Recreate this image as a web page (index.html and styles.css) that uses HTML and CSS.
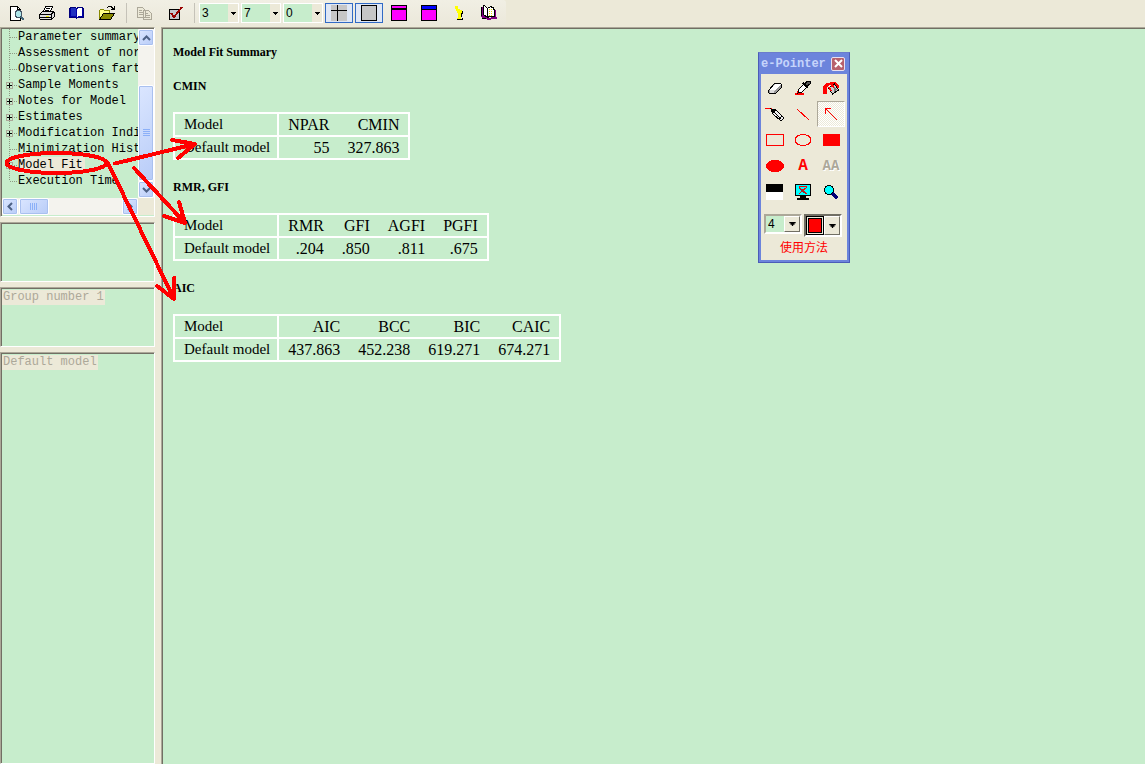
FILE: index.html
```html
<!DOCTYPE html>
<html lang="en">
<head>
<meta charset="utf-8">
<title>Amos Output</title>
<link rel="stylesheet" href="styles.css">
</head>
<body>
<svg class="defs" aria-hidden="true">
  <symbol id="leaf" viewBox="0 0 16 16"><path d="M7.5 0V16M8 8.5H15" class="dots"/></symbol>
  <symbol id="last" viewBox="0 0 16 16"><path d="M7.5 0V8M8 8.5H15" class="dots"/></symbol>
  <symbol id="plus" viewBox="0 0 16 16"><path d="M7.5 0V4M7.5 12V16M12 8.5H15" class="dots"/><path d="M4.500 5.500h6v6h-6z" fill="none" stroke="#aca899"/><path d="M5 8.500h5M7.500 6v5" stroke="#000"/></symbol>
  <symbol id="drop" viewBox="0 0 5 3"><path d="M0 0h5v1H4v1H3v1H2V2H1V1H0z"/></symbol>
</svg>

<header class="toolbar">
  <div class="band">
  <button class="tool" aria-label="Print preview"><svg width="18" height="17" viewBox="0 0 18 17"><path d="M2.500 1.500h7l3 3v11h-10z" fill="#fff" stroke="#000"/><path d="M9.500 1.500v3h3" fill="none" stroke="#000"/><circle cx="10.500" cy="9" r="3.500" fill="#aee6ea" stroke="#456"/><path d="M13 12l3 3" stroke="#467" stroke-width="2"/></svg></button>
  <button class="tool" aria-label="Print"><svg width="18" height="17" viewBox="0 0 18 17"><path d="M5.500 6.500l2-5h7l-2 5z" fill="#fff" stroke="#000"/><path d="M8 3.500h4M7 5.500h4" stroke="#000"/><path d="M1.500 9.500l3-3h11l1 1v4l-3 3h-11l-1-1z" fill="#ddd" stroke="#000"/><path d="M2 9.500h11l3-3M2 12.500h11M13.500 10v4" fill="none" stroke="#000"/><path d="M8 11.500h3" stroke="#ee0"/></svg></button>
  <button class="tool" aria-label="Contents"><svg width="18" height="17" viewBox="0 0 18 17"><path d="M1.500 3.500h1v-1h5l1 1 1-1h5v1h1v9h-6l-1 1-1-1h-6z" fill="#0000a8" stroke="#00007c"/><path d="M3 3h4l1 1v8l-1-1H3z" fill="#2030c0"/><path d="M9 4l1-1h4v8h-4l-1 1z" fill="#fff"/></svg></button>
  <button class="tool" aria-label="Open"><svg width="18" height="17" viewBox="0 0 18 17"><path d="M1.500 14V5.500l1-1h3l1 1h5v3" fill="#ff8" stroke="#880"/><path d="M1.500 14.500l4-6h11l-4 6z" fill="#880" stroke="#000"/><path d="M9 3l2-1.500h2l3 3M13 4.500h3.500V1" fill="none" stroke="#000"/></svg></button>
  <span class="sep"></span>
  <button class="tool" aria-label="Copy" disabled><svg width="18" height="17" viewBox="0 0 18 17"><path d="M1.500 2.500h5l3 3v7h-8zM7.500 5.500h5l3 3v6h-8z" fill="#ece9d8" stroke="#aca899"/><path d="M3 5.500h3M3 7.500h4M3 9.500h4M9 8.500h3M9 10.500h5M9 12.500h5" stroke="#aca899"/></svg></button>
  <button class="tool" aria-label="Options"><svg width="18" height="17" viewBox="0 0 18 17"><path d="M3.500 4.500h10v10h-10z" fill="#c4c4cc" stroke="#000"/><path d="M5 8l3 4 8-10" fill="none" stroke="#900" stroke-width="2"/></svg></button>
  <span class="sep"></span>
  <span class="combo"><select aria-label="Column width"><option>3</option></select><svg width="5" height="3"><use href="#drop"/></svg></span>
  <span class="combo"><select aria-label="Digits"><option>7</option></select><svg width="5" height="3"><use href="#drop"/></svg></span>
  <span class="combo"><select aria-label="Decimals"><option>0</option></select><svg width="5" height="3"><use href="#drop"/></svg></span>
  <button class="tool pressed" aria-label="Grid lines" aria-pressed="true"><svg width="16" height="16" viewBox="0 0 16 16"><path d="M0 0h16v16H0z" fill="#c6c6c6"/><path d="M0 5.500h16M6.500 0v16" stroke="#000"/></svg></button>
  <button class="tool pressed" aria-label="Border" aria-pressed="true"><svg width="16" height="16" viewBox="0 0 16 16"><path d="M.5.500h15v15H.5z" fill="#c6c6c6" stroke="#000"/></svg></button>
  <button class="tool" aria-label="Table heading"><svg width="16" height="16" viewBox="0 0 16 16"><path d="M.5.500h15v15H.5z" fill="#f0f" stroke="#000"/><path d="M0 4h16" stroke="#000" stroke-width="2"/></svg></button>
  <button class="tool" aria-label="Table title"><svg width="16" height="16" viewBox="0 0 16 16"><path d="M.5.500h15v15H.5z" fill="#f0f" stroke="#000"/><path d="M1 1h14v3H1z" fill="#00f"/><path d="M0 4.500h16" stroke="#000"/></svg></button>
  <button class="tool" aria-label="Information"><svg width="10" height="16" viewBox="0 0 10 16"><path d="M6 5h2v1h1v3H8v4h1v2H3v-1h5z" fill="#000"/><path d="M1 1h3v3H1zM2 4h4v1h2v3H7v6H3v-1h1V8H3V6H2z" fill="#ff0"/></svg></button>
  <button class="tool" aria-label="Help"><svg width="18" height="16" viewBox="0 0 18 16"><path d="M1 2h3v9l4 2h2l2-1h5v2h-5l-2 1H8l-2-1H3l-2-2zM14 5h2v8h-2z" fill="#800080"/><path d="M1.500 2v9M2 13h4" fill="none" stroke="#000"/><path d="M3.500.5h1l3 3v9l-4-3zM7.500 12.500v-9l3-2h1v1h2v2h1v7h-5z" fill="#fff" stroke="#000"/><path d="M9.500 4v7M11.500 4v7" stroke="#dd0" stroke-dasharray="1 1"/></svg></button>
  </div>
</header>

<div class="workspace">
  <aside class="side">
    <nav class="pane tree" aria-label="Output sections">
      <ul class="items">
        <li><svg class="twig"><use href="#leaf"/></svg><span>Parameter summary</span></li>
        <li><svg class="twig"><use href="#leaf"/></svg><span>Assessment of nor</span></li>
        <li><svg class="twig"><use href="#leaf"/></svg><span>Observations fart</span></li>
        <li><svg class="twig"><use href="#plus"/></svg><span>Sample Moments</span></li>
        <li><svg class="twig"><use href="#plus"/></svg><span>Notes for Model</span></li>
        <li><svg class="twig"><use href="#plus"/></svg><span>Estimates</span></li>
        <li><svg class="twig"><use href="#plus"/></svg><span>Modification Indi</span></li>
        <li><svg class="twig"><use href="#leaf"/></svg><span>Minimization Hist</span></li>
        <li><svg class="twig"><use href="#plus"/></svg><span class="chosen">Model Fit</span></li>
        <li><svg class="twig"><use href="#last"/></svg><span>Execution Time</span></li>
      </ul>
      <div class="vbar">
        <button class="arrow" aria-label="Scroll up"><svg width="9" height="6" viewBox="0 0 9 6"><path d="M1 5l3.500-3.500L8 5"/></svg></button>
        <div class="thumb"><svg width="7" height="8" viewBox="0 0 7 8"><path d="M0 .5h7M0 2.500h7M0 4.500h7M0 6.500h7"/></svg></div>
        <button class="arrow" aria-label="Scroll down"><svg width="9" height="6" viewBox="0 0 9 6"><path d="M1 1l3.500 3.500L8 1"/></svg></button>
      </div>
      <div class="hbar">
        <button class="arrow" aria-label="Scroll left"><svg width="6" height="9" viewBox="0 0 6 9"><path d="M5 1L1.500 4.500 5 8"/></svg></button>
        <div class="thumb"><svg width="8" height="7" viewBox="0 0 8 7"><path d="M.5 0v7M2.500 0v7M4.500 0v7M6.500 0v7"/></svg></div>
        <button class="arrow" aria-label="Scroll right"><svg width="6" height="9" viewBox="0 0 6 9"><path d="M1 1l3.500 3.500L1 8"/></svg></button>
      </div>
      <div class="corner"></div>
    </nav>
    <section class="pane short"></section>
    <section class="pane short"><span class="muted">Group number 1</span></section>
    <section class="pane rest"><span class="muted">Default model</span></section>
  </aside>

  <main class="output">
    <h1>Model Fit Summary</h1>
    <h2>CMIN</h2>
    <table>
      <tr><th>Model</th><th>NPAR</th><th>CMIN</th></tr>
      <tr><td>Default model</td><td>55</td><td>327.863</td></tr>
    </table>
    <h2>RMR, GFI</h2>
    <table>
      <tr><th>Model</th><th>RMR</th><th>GFI</th><th>AGFI</th><th>PGFI</th></tr>
      <tr><td>Default model</td><td>.204</td><td>.850</td><td>.811</td><td>.675</td></tr>
    </table>
    <h2>AIC</h2>
    <table>
      <tr><th>Model</th><th>AIC</th><th>BCC</th><th>BIC</th><th>CAIC</th></tr>
      <tr><td>Default model</td><td>437.863</td><td>452.238</td><td>619.271</td><td>674.271</td></tr>
    </table>
  </main>
</div>

<svg class="ink" width="220" height="320" viewBox="0 0 220 320" aria-hidden="true">
  <ellipse cx="56.500" cy="163" rx="50" ry="10"/>
  <path d="M115 163.500L195 144M172 140l23 4-17 14"/>
  <path d="M134 168l51 55M179 202l6 21-21-7"/>
  <path d="M108 163l66 136M174 278v21l-17-13"/>
</svg>

<section class="pointer" aria-label="e-Pointer">
  <div class="title"><span>e-Pointer</span><button class="close" aria-label="Close"><svg width="9" height="9" viewBox="0 0 9 9"><path d="M1 1l7 7M8 1L1 8"/></svg></button></div>
  <div class="body">
    <div class="palette">
      <button aria-label="Eraser"><svg width="18" height="18" viewBox="0 0 18 18"><path d="M2.500 11.500l6-7h6l1 1v3l-6 6h-6l-1-1z" fill="#999" stroke="#000"/><path d="M3 11l6-6h6l-6 6z" fill="#fff"/><path d="M4 11h5l-1 3H4z" fill="#ddd"/></svg></button>
      <button aria-label="Colour picker"><svg width="18" height="18" viewBox="0 0 18 18"><path d="M1 14h9v2H1zM3 12h5v2H3z" fill="#f00"/><path d="M4 14l1-4 5-5 3 3-5 5z" fill="#fff" stroke="#000"/><path d="M9 4l5 5" stroke="#000" stroke-width="2"/><path d="M11 5l2-3h3v3l-3 2z" fill="#555" stroke="#000"/></svg></button>
      <button aria-label="Fill"><svg width="18" height="18" viewBox="0 0 18 18"><path d="M1 15V7l3-3h3l2-1h4l4 4v2h-2l-3-3H7L5 8v7z" fill="#f00"/><path d="M6.500 9l6-4 4 6-6 4z" fill="#ccc" stroke="#000"/><path d="M12 7l3 4-3 2z" fill="#777"/><path d="M7 8l2 4M9 6l3 2" fill="none" stroke="#f00" stroke-width="2"/></svg></button>
      <button aria-label="Pencil"><svg width="20" height="18" viewBox="0 0 20 18"><path d="M0 3.500h7" stroke="#f00"/><path d="M6 4l5 1 8 8-3 3-8-7z" fill="#eee" stroke="#000"/><path d="M6 4l5 1-3 3z" stroke="#000"/><path d="M9 7l7 7M14 14l3-3" fill="none" stroke="#000"/></svg></button>
      <button aria-label="Line"><svg width="18" height="18" viewBox="0 0 18 18"><path d="M3 4l12 11" stroke="#f00"/></svg></button>
      <button class="active" aria-label="Arrow" aria-pressed="true"><svg width="18" height="18" viewBox="0 0 18 18"><path d="M3 3l12 12M3 9V3h6" fill="none" stroke="#f00"/></svg></button>
      <button aria-label="Rectangle"><svg width="18" height="18" viewBox="0 0 18 18"><path d="M.5 3.500h17v11H.5z" fill="none" stroke="#f00"/></svg></button>
      <button aria-label="Ellipse"><svg width="18" height="18" viewBox="0 0 18 18"><ellipse cx="9" cy="9" rx="8" ry="5.500" fill="none" stroke="#f00"/></svg></button>
      <button aria-label="Filled rectangle"><svg width="18" height="18" viewBox="0 0 18 18"><path d="M1 3h17v12H1z" fill="#f00"/></svg></button>
      <button aria-label="Filled ellipse"><svg width="18" height="18" viewBox="0 0 18 18"><ellipse cx="9" cy="9" rx="9" ry="6" fill="#f00"/></svg></button>
      <button aria-label="Text" class="letter">A</button>
      <button aria-label="Smooth text" class="letter gray" disabled>AA</button>
      <button aria-label="Board"><svg width="18" height="18" viewBox="0 0 18 18"><path d="M0 1h17v8H0z" fill="#000"/><path d="M0 9h17v8H0z" fill="#fff"/></svg></button>
      <button aria-label="Clear screen"><svg width="18" height="18" viewBox="0 0 18 18"><path d="M1.500 1.500h15v11h-15z" fill="#0ff" stroke="#000"/><path d="M6 13h6v2H6zM3 15h12v2H3z"/><path d="M5 4l8 7M13 4l-8 7M5 3.500h8" fill="none" stroke="#f00"/><path d="M5 5l7 6" stroke="#833"/></svg></button>
      <button aria-label="Magnifier"><svg width="18" height="18" viewBox="0 0 18 18"><circle cx="7" cy="7" r="4.500" fill="#0ff" stroke="#000"/><path d="M10.500 10.500l5 5" stroke="#007" stroke-width="3"/></svg></button>
    </div>
    <div class="choices">
      <span class="size"><select aria-label="Pen width"><option>4</option></select><span class="knob"><svg width="7" height="4" viewBox="0 0 5 3"><use href="#drop"/></svg></span></span>
      <button class="color" aria-label="Pen colour"><span class="swatch"></span><span class="knob"><svg width="7" height="4" viewBox="0 0 5 3"><use href="#drop"/></svg></span></button>
    </div>
    <a class="help" href="#" lang="zh">使用方法</a>
  </div>
</section>
</body>
</html>
```
FILE: styles.css
```css
:root {
  --face: #ece9d8;
  --green: #c7edcc;
  --shadow: #aca899;
  --dark: #716f64;
}
* { box-sizing: border-box; }
body {
  margin: 0;
  height: 100vh;
  display: flex;
  flex-direction: column;
  overflow: hidden;
  position: relative;
  background: var(--face);
  font-family: "Liberation Sans", sans-serif;
}
button, select { margin: 0; padding: 0; border: 0; background: none; font: inherit; color: #000; }
svg { display: block; flex: none; }
.defs { position: absolute; width: 0; height: 0; }
.dots { stroke: #8f9a84; stroke-dasharray: 1 1; fill: none; }

.toolbar { flex: none; height: 27px; background: var(--face); }
.band {
  display: flex;
  align-items: center;
  width: fit-content;
  height: 26px;
  padding: 0 2px;
  border-radius: 0 3px 3px 0;
  background: linear-gradient(#f1efe4, #ebe8da);
}
.tool {
  width: 28px;
  height: 20px;
  margin: 0 1px;
  display: flex;
  align-items: center;
  justify-content: center;
}
.tool svg { shape-rendering: crispEdges; }
.pressed { border: 1px solid #316ac5; background: #dfe7f5; }
.sep { width: 8px; height: 20px; background: linear-gradient(#c5c2b8, #c5c2b8) center / 1px 100% no-repeat; }
.combo {
  position: relative;
  display: flex;
  width: 40px;
  height: 20px;
  margin: 0 1px;
  border: 1px solid #fff;
  background: var(--face);
}
.combo select {
  appearance: none;
  width: 100%;
  padding-left: 2px;
  background: linear-gradient(90deg, var(--green) 28px, transparent 28px);
  font-size: 12px;
}
.combo svg { position: absolute; right: 2px; top: 8px; }

.workspace { flex: 1; min-height: 0; display: flex; gap: 6px; }
.side { flex: none; width: 155px; display: flex; flex-direction: column; gap: 5px; }
.pane, .output {
  border: 1px solid var(--shadow);
  border-right-color: #fff;
  border-bottom-color: #fff;
  background: var(--green);
  box-shadow: inset 1px 1px var(--dark);
}
.pane { font: 12px/15px "Liberation Mono", monospace; }
.short { flex: none; height: 60px; padding: 2px 1px; }
.rest { flex: 1; padding: 2px 1px; }
.muted { display: inline-block; padding: 0 1px; background: var(--face); color: var(--shadow); }

.tree {
  flex: none;
  display: grid;
  grid-template: 169px 17px / 1fr 16px;
  height: 190px;
  padding: 1px 0 0 1px;
}
.items { margin: 0; padding: 0; list-style: none; overflow: hidden; }
.items li { display: flex; align-items: center; height: 16px; white-space: nowrap; }
.items span { line-height: 16px; }
.items .chosen { padding-right: 2px; background: var(--face); }
.twig { width: 16px; height: 16px; shape-rendering: crispEdges; }
.vbar, .hbar { display: flex; background: #f4f3ee; }
.vbar { flex-direction: column; justify-content: space-between; }
.corner { background: var(--face); }
.arrow, .thumb {
  display: flex;
  align-items: center;
  justify-content: center;
  border: 1px solid #fff;
  border-radius: 2px;
  background: linear-gradient(135deg, #dbe6ff, #b8ccf8);
  box-shadow: inset 0 0 0 1px #a9c0ef;
}
.arrow { flex: none; width: 16px; height: 17px; }
.arrow path { fill: none; stroke: #4d6185; stroke-width: 2; }
.thumb path { stroke: #8cb0f8; shape-rendering: crispEdges; }
.vbar .thumb { height: 96px; margin-top: auto; }
.hbar .thumb { width: 30px; margin: 0 auto 0 1px; }

.output { flex: 1; min-width: 0; padding: 16px 11px; border-right: 0; border-bottom: 0; font-family: "Liberation Serif", serif; }
h1, h2 { margin: 0 0 18px; font-size: 12px; line-height: 16px; font-weight: bold; }
table { margin-bottom: 19px; border: 2px solid #fff; border-collapse: collapse; font-size: 16px; line-height: 21px; }
th, td { padding: 0 9px; font-weight: normal; text-align: right; }
th { border-bottom: 2px solid #fff; }
th:first-child, td:first-child { padding-right: 7px; border-right: 2px solid #fff; text-align: left; font-size: 15px; }

.ink { position: absolute; left: 0; top: 0; fill: none; stroke: #f00; stroke-width: 4; stroke-linecap: round; stroke-linejoin: round; shape-rendering: crispEdges; pointer-events: none; }

.pointer {
  position: absolute;
  left: 758px;
  top: 52px;
  width: 92px;
  padding: 0 2px 2px;
  border: 1px solid #4a5cb8;
  border-top-color: #6b7ccc;
  background: #6c84dc;
}
.title {
  display: flex;
  align-items: center;
  justify-content: space-between;
  height: 21px;
  padding-right: 2px;
  color: #c6d4fb;
  font: bold 12px/20px "Liberation Mono", monospace;
}
.close {
  width: 14px;
  height: 14px;
  display: flex;
  align-items: center;
  justify-content: center;
  border: 1px solid #e8e0f0;
  border-radius: 2px;
  background: #b8606c;
}
.close path { stroke: #fff; stroke-width: 2; }
.body { padding: 1px 0 4px; background: var(--face); display: flex; flex-direction: column; }
.palette { display: grid; grid-template-columns: repeat(3, 28px); grid-auto-rows: 26px; }
.palette button { display: flex; align-items: center; justify-content: center; }
.palette svg { shape-rendering: crispEdges; }
.palette .active {
  border: 1px solid;
  border-color: var(--shadow) #fff #fff var(--shadow);
  background: repeating-conic-gradient(#fff 0 25%, #ece9d8 0 50%) 0 0 / 2px 2px;
}
.palette .letter { color: #f00; font: bold 16px/16px "Liberation Mono", monospace; }
.palette .gray { color: var(--shadow); font-size: 14px; text-shadow: 1px 1px #fff; }
.choices { display: flex; justify-content: space-between; padding: 9px 5px 0 3px; }
.size, .color {
  display: flex;
  width: 38px;
  height: 20px;
  border: 2px solid;
  border-color: var(--shadow) #fff #fff var(--shadow);
  background: var(--green);
}
.color { height: 23px; border-color: var(--dark) #fff #fff var(--dark); background: var(--face); }
.size select { appearance: none; flex: 1; min-width: 0; padding-left: 2px; font-size: 12px; }
.knob {
  width: 16px;
  display: flex;
  align-items: center;
  justify-content: center;
  border: 1px solid;
  border-color: #fff var(--dark) var(--dark) #fff;
  background: var(--face);
}
.color .knob { height: 100%; }
.swatch { flex: 1; height: 100%; border: 1px solid #000; background: #f00; box-shadow: inset 0 0 0 1px var(--face), inset 0 0 0 2px #000; }
.help { padding-top: 1px; text-align: center; color: #f00; text-decoration: none; font: 12px/18px "Noto Sans CJK SC", sans-serif; }
```
